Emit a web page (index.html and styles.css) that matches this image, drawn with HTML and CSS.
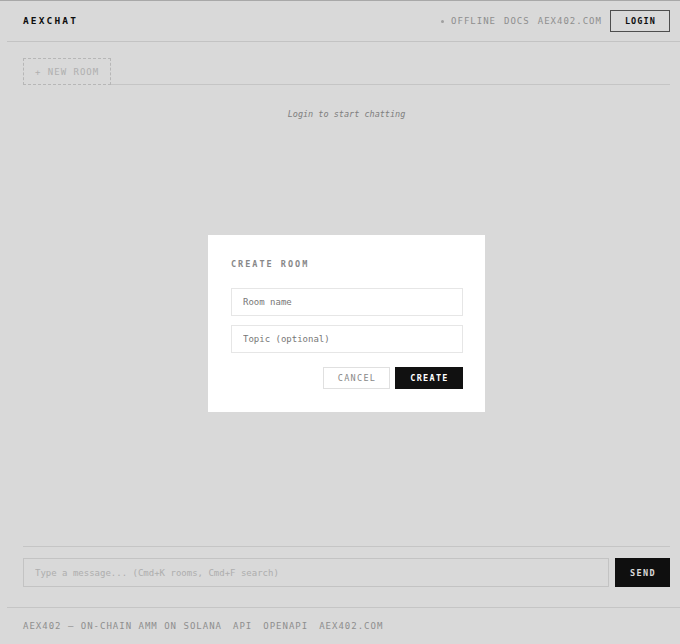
FILE: index.html
```html
<!DOCTYPE html>
<html lang="en">
<head>
<meta charset="utf-8">
<title>AEXCHAT</title>
<link rel="stylesheet" href="styles.css">
</head>
<body>
<div class="app">
  <header class="topbar">
    <div class="brand">AEXCHAT</div>
    <nav class="topnav">
      <span class="status"><span class="status-dot"></span>OFFLINE</span>
      <a class="navlink" href="#">DOCS</a>
      <a class="navlink" href="#">AEX402.COM</a>
      <button class="btn-login" type="button">LOGIN</button>
    </nav>
  </header>

  <div class="roombar">
    <button class="btn-newroom" type="button">+ NEW ROOM</button>
  </div>

  <main class="messages">
    <p class="empty-note">Login to start chatting</p>
  </main>

  <form class="composer">
    <input class="composer-input" type="text" placeholder="Type a message... (Cmd+K rooms, Cmd+F search)">
    <button class="btn-send" type="button">SEND</button>
  </form>

  <footer class="footer">
    <span>AEX402 — ON-CHAIN AMM ON SOLANA</span>
    <a href="#">API</a>
    <a href="#">OPENAPI</a>
    <a href="#">AEX402.COM</a>
  </footer>
</div>

<div class="overlay">
  <div class="dialog" role="dialog" aria-labelledby="dlg-title">
    <h2 class="dialog-title" id="dlg-title">CREATE ROOM</h2>
    <input class="field" type="text" placeholder="Room name">
    <input class="field" type="text" placeholder="Topic (optional)">
    <div class="dialog-actions">
      <button class="btn-cancel" type="button">CANCEL</button>
      <button class="btn-create" type="button">CREATE</button>
    </div>
  </div>
</div>
</body>
</html>
```

FILE: styles.css
```css
* {
  box-sizing: border-box;
}

html,
body {
  height: 100%;
}

body {
  margin: 0;
  overflow: hidden;
  background: #ffffff;
  border-top: 1px solid #c6c6c6;
  font-family: "DejaVu Sans Mono", "Liberation Mono", monospace;
  color: #111111;
}

a {
  color: inherit;
  text-decoration: none;
}

button,
input {
  font-family: inherit;
  margin: 0;
}

/* page shell */
.app {
  margin-left: 7px;
  width: 679px;
  height: calc(100vh - 1px);
  display: flex;
  flex-direction: column;
}

/* top bar */
.topbar {
  height: 41px;
  flex: none;
  padding: 0 16px;
  border-bottom: 1px solid #e6e6e6;
  display: flex;
  align-items: center;
  justify-content: space-between;
}

.brand {
  font-size: 9.5px;
  font-weight: bold;
  letter-spacing: 2.15px;
  line-height: 12px;
  color: #111111;
}

.topnav {
  display: flex;
  align-items: center;
  gap: 8px;
  font-size: 9px;
  letter-spacing: 1px;
  line-height: 12px;
  color: #a8a8a8;
}

.status {
  display: flex;
  align-items: center;
  gap: 7px;
}

.status-dot {
  width: 3px;
  height: 3px;
  border-radius: 50%;
  background: #bcbcbc;
}

.btn-login {
  height: 22px;
  padding: 0 13px 0 14px;
  background: #ffffff;
  border: 1px solid #5c5c5c;
  font-size: 8.5px;
  font-weight: bold;
  letter-spacing: 1.1px;
  color: #111111;
  cursor: pointer;
}

/* room tabs */
.roombar {
  height: 43px;
  flex: none;
  margin: 0 16px;
  padding-top: 16px;
  border-bottom: 1px solid #e8e8e8;
  display: flex;
  align-items: flex-end;
}

.btn-newroom {
  height: 27px;
  margin-bottom: -1px;
  padding: 0 11px;
  background: #ffffff;
  border: 1px dashed #d8d8d8;
  font-size: 9px;
  letter-spacing: 1px;
  color: #cfcfcf;
}

/* message list */
.messages {
  flex: 1;
  margin: 0 16px;
  padding-top: 23px;
  border-bottom: 1px solid #e8e8e8;
  text-align: center;
}

.empty-note {
  margin: 0;
  font-size: 8.5px;
  font-style: italic;
  line-height: 12px;
  color: #969696;
}

/* composer */
.composer {
  flex: none;
  margin: 0;
  padding: 11px 16px 20px;
  display: flex;
  gap: 6px;
}

.composer-input {
  flex: 1;
  height: 29px;
  padding: 0 11px;
  border: 1px solid #e6e6e6;
  background: #ffffff;
  font-size: 9px;
  color: #111111;
  outline: none;
}

.composer-input::placeholder {
  color: #cdcdcd;
}

.btn-send {
  width: 55px;
  height: 29px;
  padding: 0 0 0 1px;
  background: #121212;
  border: none;
  color: #ffffff;
  font-size: 8.5px;
  font-weight: bold;
  letter-spacing: 1.4px;
}

/* footer */
.footer {
  flex: none;
  height: 37px;
  padding: 12px 16px;
  border-top: 1px solid #e8e8e8;
  display: flex;
  gap: 11px;
  font-size: 9px;
  letter-spacing: 1px;
  line-height: 12px;
  color: #a8a8a8;
  white-space: nowrap;
}

/* modal */
.overlay {
  position: fixed;
  inset: 0;
  padding: 2px 0 0 13px;
  background: rgba(0, 0, 0, 0.15);
  display: flex;
  align-items: center;
  justify-content: center;
}

.dialog {
  width: 277px;
  padding: 23px 22px 23px 23px;
  background: #ffffff;
  display: flex;
  flex-direction: column;
}

.dialog-title {
  margin: 0 0 18px;
  font-size: 8.5px;
  font-weight: bold;
  letter-spacing: 2px;
  line-height: 12px;
  color: #888888;
}

.field {
  height: 28px;
  padding: 0 11px;
  border: 1px solid #e6e6e6;
  background: #ffffff;
  font-size: 9px;
  color: #111111;
  outline: none;
}

.field + .field {
  margin-top: 9px;
}

.field::placeholder {
  color: #777777;
}

.dialog-actions {
  margin-top: 14px;
  display: flex;
  justify-content: flex-end;
  gap: 5px;
}

.btn-cancel,
.btn-create {
  height: 22px;
  font-size: 8.5px;
  letter-spacing: 1.3px;
  cursor: pointer;
}

.btn-cancel {
  width: 67px;
  padding: 0 0 0 1px;
  background: #ffffff;
  border: 1px solid #e0e0e0;
  color: #888888;
}

.btn-create {
  width: 68px;
  padding: 0 0 0 1px;
  background: #111111;
  border: 1px solid #111111;
  color: #ffffff;
  font-weight: bold;
}
```
